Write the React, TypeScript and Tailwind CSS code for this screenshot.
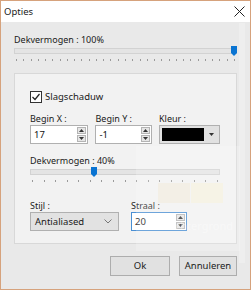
import React from 'react';

const font = { fontFamily: '"Noto Sans", "Open Sans", sans-serif' };

function Ticks({ count }: { count: number }) {
  return (
    <div className="flex justify-between px-[2px] mt-[3px]">
      {[...Array(count)].map((_, i) => (
        <div key={i} className="w-px h-[2px] bg-[#9a9a9a]" />
      ))}
    </div>
  );
}

function Slider({ value, ticks }: { value: number; ticks: number }) {
  return (
    <div>
      <div className="relative h-[10px] flex items-center">
        <div className="w-full h-[6px] bg-[#e4e4e4] border border-[#d2d2d2]" />
        <svg
          className="absolute top-0"
          style={{ left: `calc(${value}% - ${(value / 100) * 6}px)` }}
          width="6"
          height="10"
          viewBox="0 0 6 10"
        >
          <path d="M0 0 H6 V7 L3 10 L0 7 Z" fill="#0a74d2" />
        </svg>
      </div>
      <Ticks count={ticks} />
    </div>
  );
}

function Spinner() {
  return (
    <div className="flex flex-col gap-px mr-[1px]">
      <div className="w-[9px] h-[7px] bg-[#e6e6e6] border border-[#b4b4b4] flex items-center justify-center">
        <svg width="5" height="3" viewBox="0 0 5 3"><path d="M0 3 L2.5 0 L5 3 Z" fill="#333" /></svg>
      </div>
      <div className="w-[9px] h-[7px] bg-[#e6e6e6] border border-[#b4b4b4] flex items-center justify-center">
        <svg width="5" height="3" viewBox="0 0 5 3"><path d="M0 0 L2.5 3 L5 0 Z" fill="#333" /></svg>
      </div>
    </div>
  );
}

function NumberBox({ value, width, focused }: { value: string; width: string; focused?: boolean }) {
  return (
    <div
      className={`${width} h-[19px] bg-white border flex items-center justify-between pl-[3px] ${
        focused ? 'border-[#4a8fd3]' : 'border-[#b0b0b0]'
      }`}
    >
      <span className="text-[9.5px] text-[#111] leading-none">{value}</span>
      <Spinner />
    </div>
  );
}

export default function App() {
  return (
    <div
      className="relative w-[251px] h-[290px] border border-[#d6a27c] bg-[#ececec] flex flex-col overflow-hidden text-[#1a1a1a] text-[9px]"
      style={font}
    >
      {/* title bar */}
      <div className="h-[21px] bg-white flex items-center justify-between pl-[3px] pr-[5px] shrink-0">
        <span className="text-[9.5px] leading-none">Opties</span>
        <svg width="11" height="11" viewBox="0 0 11 11">
          <path d="M0.5 0.5 L10.5 10.5 M10.5 0.5 L0.5 10.5" stroke="#222" strokeWidth="1" />
        </svg>
      </div>

      {/* body */}
      <div className="flex-1 flex flex-col px-[13px] bg-[#e9e9e9]">
        <div className="pt-[12px] leading-[12px]">Dekvermogen : 100%</div>
        <div>
          <Slider value={100} ticks={31} />
        </div>

        {/* panel */}
        <div className="mt-[12px] h-[171px] border border-[#d8d8d8] bg-[#f2f2f2] pl-[15px] pr-[16px]">
          <div className="flex items-center gap-[3px] mt-[17px]">
            <div className="w-[12px] h-[12px] border border-[#333] bg-white flex items-center justify-center">
              <svg width="10" height="10" viewBox="0 0 10 10">
                <path d="M1.5 5 L4 7.5 L8.5 2" fill="none" stroke="#222" strokeWidth="1.2" />
              </svg>
            </div>
            <span className="text-[9.5px] leading-none">Slagschaduw</span>
          </div>

          <div className="flex mt-[10px]">
            <div className="w-[67px]">
              <div className="leading-[12px]">Begin X :</div>
              <NumberBox value="17" width="w-[58px]" />
            </div>
            <div className="w-[65px]">
              <div className="leading-[12px]">Begin Y :</div>
              <NumberBox value="-1" width="w-[57px]" />
            </div>
            <div>
              <div className="leading-[12px]">Kleur :</div>
              <div className="w-[61px] h-[19px] bg-[#e1e1e1] border border-[#b0b0b0] flex items-center pl-[2px]">
                <div className="w-[42px] h-[13px] bg-black" />
                <div className="flex-1 flex justify-center">
                  <svg width="5" height="3" viewBox="0 0 5 3"><path d="M0 0 L2.5 3 L5 0 Z" fill="#333" /></svg>
                </div>
              </div>
            </div>
          </div>

          <div className="mt-[11px] leading-[12px]">Dekvermogen : 40%</div>
          <div>
            <Slider value={33} ticks={17} />
          </div>

          <div className="flex mt-[18px]">
            <div className="w-[101px]">
              <div className="leading-[12px]">Stijl :</div>
              <div className="w-[89px] h-[19px] bg-[#e2e2e2] border border-[#b0b0b0] flex items-center justify-between pl-[4px] pr-[6px]">
                <span className="text-[9.5px] leading-none">Antialiased</span>
                <svg width="8" height="5" viewBox="0 0 8 5">
                  <path d="M0.5 0.5 L4 4 L7.5 0.5" fill="none" stroke="#777" strokeWidth="1" />
                </svg>
              </div>
            </div>
            <div>
              <div className="leading-[12px]">Straal :</div>
              <NumberBox value="20" width="w-[56px]" focused />
            </div>
          </div>
        </div>

        {/* buttons */}
        <div className="flex justify-end gap-[9px] mt-[12px]">
          <div className="w-[60px] h-[20px] bg-[#e1e1e1] border border-[#adadad] flex items-center justify-center text-[9.5px]">
            Ok
          </div>
          <div className="w-[58px] h-[20px] bg-[#e1e1e1] border border-[#adadad] flex items-center justify-center text-[9.5px]">
            Annuleren
          </div>
        </div>
      </div>

      {/* preview window showing through the translucent dialog */}
      <div className="absolute left-[135px] top-[145px] w-[104px] h-[105px] bg-white/20 pointer-events-none" />
      <div className="absolute left-[157px] top-[182px] w-[32px] h-[20px] bg-[#f3e3c8]/30 pointer-events-none" />
      <div className="absolute left-[190px] top-[182px] w-[32px] h-[20px] bg-[#fbf3c8]/30 pointer-events-none" />
      <div className="absolute left-[167px] top-[219px] text-[11px] leading-none text-white/40 pointer-events-none">
        Achtergrond
      </div>
      <div className="absolute left-[238px] top-[22px] w-[6px] h-[240px] bg-white/25 pointer-events-none" />
    </div>
  );
}
